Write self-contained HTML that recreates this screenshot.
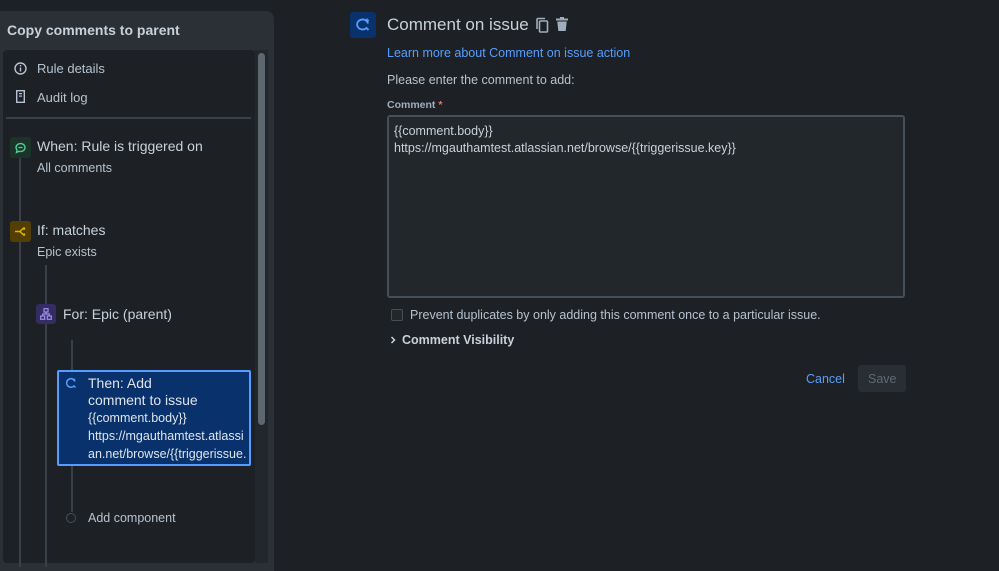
<!DOCTYPE html>
<html><head><meta charset="utf-8"><style>
*{box-sizing:border-box;margin:0;padding:0}
body{width:999px;height:566px;background:#1d2125;font-family:"Liberation Sans",sans-serif;color:#b6c2cf;position:relative;overflow:hidden}
.a{position:absolute;white-space:nowrap}
</style></head><body>
<div class="a" style="left:0;top:11px;width:274px;height:560px;background:#2a3036;border-radius:0 8px 0 0"></div>
<div class="a" style="left:7px;top:22px;font-size:14px;font-weight:bold;color:#c7d1db">Copy comments to parent</div>
<div class="a" style="left:3px;top:50px;width:252px;height:513px;background:#1d2125;border-radius:4px"></div>
<div class="a" style="left:255px;top:50px;width:13px;height:513px;background:#22272b"></div>
<div class="a" style="left:258px;top:53px;width:7px;height:372px;background:#5e6670;border-radius:4px"></div>
<svg class="a" style="left:14px;top:62px" width="13" height="13" viewBox="0 0 13 13"><circle cx="6.5" cy="6.5" r="5.5" fill="none" stroke="#b6c2cf" stroke-width="1.4"/><rect x="5.8" y="5.5" width="1.4" height="4" fill="#b6c2cf"/><rect x="5.8" y="3" width="1.4" height="1.4" fill="#b6c2cf"/></svg>
<div class="a" style="left:37px;top:61px;font-size:13px">Rule details</div>
<svg class="a" style="left:16px;top:90px" width="9" height="13" viewBox="0 0 9 13"><rect x="0.7" y="0.7" width="7.6" height="11.6" fill="none" stroke="#b6c2cf" stroke-width="1.4"/><rect x="3" y="3" width="3" height="1.2" fill="#b6c2cf"/><rect x="3" y="5.5" width="3" height="1.2" fill="#b6c2cf"/></svg>
<div class="a" style="left:37px;top:90px;font-size:13px">Audit log</div>
<div class="a" style="left:6px;top:117px;width:245px;height:2px;background:#38414a"></div>
<div class="a" style="left:19px;top:157px;width:2px;height:410px;background:#38414a"></div>
<div class="a" style="left:45px;top:265px;width:2px;height:302px;background:#38414a"></div>
<div class="a" style="left:71px;top:340px;width:2px;height:172px;background:#38414a"></div>
<div class="a" style="left:10px;top:137px;width:21px;height:21px;background:#1c3329;border-radius:3px"></div>
<svg class="a" style="left:14px;top:141px" width="13" height="13" viewBox="0 0 13 13"><path d="M2 6.5a4.5 4 0 1 1 3 3.8L2.5 11.5 3 9A4 4 0 0 1 2 6.5z" fill="none" stroke="#4bce97" stroke-width="1.4"/><path d="M4.5 6.5h4" stroke="#4bce97" stroke-width="1.3"/></svg>
<div class="a" style="left:37px;top:138px;font-size:14px;color:#c7d1db">When: Rule is triggered on</div>
<div class="a" style="left:37px;top:161px;font-size:12.5px">All comments</div>
<div class="a" style="left:10px;top:221px;width:21px;height:21px;background:#533f04;border-radius:3px"></div>
<svg class="a" style="left:14px;top:225px" width="13" height="13" viewBox="0 0 13 13"><path d="M1 6.5h5M6 6.5l3-3M6 6.5l3 3" stroke="#e2b203" stroke-width="1.4" fill="none"/><circle cx="10" cy="3.5" r="1.3" fill="#e2b203"/><circle cx="10" cy="9.5" r="1.3" fill="#e2b203"/></svg>
<div class="a" style="left:37px;top:222px;font-size:14px;color:#c7d1db">If: matches</div>
<div class="a" style="left:37px;top:245px;font-size:12.5px">Epic exists</div>
<div class="a" style="left:36px;top:304px;width:20px;height:20px;background:#352c63;border-radius:3px"></div>
<svg class="a" style="left:40px;top:308px" width="12" height="12" viewBox="0 0 12 12"><rect x="4" y="0.7" width="4" height="3.3" fill="none" stroke="#9f8fef" stroke-width="1.2"/><rect x="0.7" y="8" width="4" height="3.3" fill="none" stroke="#9f8fef" stroke-width="1.2"/><rect x="7.3" y="8" width="4" height="3.3" fill="none" stroke="#9f8fef" stroke-width="1.2"/><path d="M6 4v2M2.7 8V6h6.6v2" stroke="#9f8fef" stroke-width="1.2" fill="none"/></svg>
<div class="a" style="left:63px;top:306px;font-size:14px;color:#c7d1db">For: Epic (parent)</div>
<div class="a" style="left:57px;top:370px;width:194px;height:96px;background:#09326c;border:2px solid #579dff;border-radius:2px"></div>
<svg class="a" style="left:65px;top:377px" width="12" height="12" viewBox="0 0 12 12"><path d="M10 4.5A4.3 4.3 0 1 0 9 9L10.5 10.5" fill="none" stroke="#579dff" stroke-width="1.5"/><path d="M9 1.5v2.5M7.8 2.7h2.4" stroke="#579dff" stroke-width="1.2"/></svg>
<div class="a" style="left:88px;top:375px;font-size:14px;line-height:17px;color:#dee4ea">Then: Add<br>comment to issue</div>
<div class="a" style="left:88px;top:409px;font-size:12.5px;line-height:18px;color:#dee4ea">{{comment.body}}<br>https://mgauthamtest.atlassi<br>an.net/browse/{{triggerissue.</div>
<div class="a" style="left:66px;top:513px;width:10px;height:10px;border:1.5px solid #454f59;border-radius:50%;background:#1d2125"></div>
<div class="a" style="left:88px;top:511px;font-size:12.5px">Add component</div>

<div class="a" style="left:350px;top:12px;width:26px;height:26px;background:#09326c;border-radius:3px"></div>
<svg class="a" style="left:355px;top:17px" width="16" height="16" viewBox="0 0 16 16"><path d="M13 6.5A5.5 5 0 1 0 11.5 11L13.5 13" fill="none" stroke="#579dff" stroke-width="1.8"/><path d="M12 1.5v4M10 3.5h4" stroke="#579dff" stroke-width="1.5"/></svg>
<div class="a" style="left:387px;top:15px;font-size:17px;color:#c7d1db">Comment on issue</div>
<svg class="a" style="left:535px;top:17px" width="14" height="16" viewBox="0 0 14 16"><rect x="4.5" y="4" width="8" height="11" rx="1" fill="none" stroke="#9fadbc" stroke-width="1.6"/><path d="M2 12V2.5A1 1 0 0 1 3 1.5h7" fill="none" stroke="#9fadbc" stroke-width="1.6"/></svg>
<svg class="a" style="left:555px;top:16px" width="14" height="16" viewBox="0 0 14 16"><rect x="1" y="2.5" width="12" height="2" fill="#9fadbc"/><rect x="5" y="1" width="4" height="2" fill="#9fadbc"/><path d="M2.3 5.5h9.4l-1 9.5H3.3z" fill="#9fadbc"/></svg>
<div class="a" style="left:387px;top:46px;font-size:12.5px;color:#579dff">Learn more about Comment on issue action</div>
<div class="a" style="left:387px;top:73px;font-size:12.5px">Please enter the comment to add:</div>
<div class="a" style="left:387px;top:99px;font-size:10.5px;font-weight:bold;color:#9fadbc">Comment <span style="color:#f87168">*</span></div>
<div class="a" style="left:387px;top:115px;width:518px;height:183px;background:#22272b;border:2px solid #454f59;border-radius:3px"></div>
<div class="a" style="left:394px;top:123px;font-size:12.5px;line-height:17px;color:#c7d1db">{{comment.body}}<br>https://mgauthamtest.atlassian.net/browse/{{triggerissue.key}}</div>
<div class="a" style="left:391px;top:309px;width:12px;height:12px;border:1.5px solid #454f59;border-radius:2px;background:#22272b"></div>
<div class="a" style="left:410px;top:308px;font-size:12.5px">Prevent duplicates by only adding this comment once to a particular issue.</div>
<svg class="a" style="left:390px;top:336px" width="6" height="8" viewBox="0 0 6 8"><path d="M1.5 1l3 3-3 3" fill="none" stroke="#c7d1db" stroke-width="1.5"/></svg>
<div class="a" style="left:402px;top:333px;font-size:12.5px;font-weight:bold;color:#c7d1db">Comment Visibility</div>
<div class="a" style="left:806px;top:372px;font-size:12.5px;color:#579dff">Cancel</div>
<div class="a" style="left:858px;top:365px;width:48px;height:27px;background:#282e33;border-radius:3px"></div>
<div class="a" style="left:868px;top:372px;font-size:12.5px;color:#5e6a75">Save</div>
</body></html>
